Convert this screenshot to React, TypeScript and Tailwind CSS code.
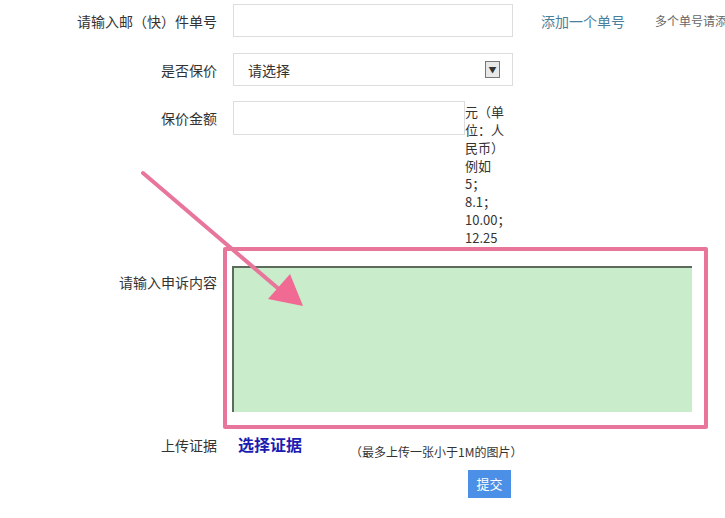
import React from 'react';

const font = { fontFamily: '"Microsoft YaHei", "Noto Sans CJK SC", sans-serif' };

function Label({ children }: { children: React.ReactNode }) {
  return <div className="w-[217px] shrink-0 text-right text-[14px] leading-[20px] text-[#333]">{children}</div>;
}

export default function App() {
  const unitLines = ['元（单', '位：人', '民币）', '例如', '5；', '8.1；', '10.00；', '12.25'];
  return (
    <div className="relative w-[725px] h-[518px] overflow-hidden bg-white text-[#333]" style={font}>
      {/* row 1 */}
      <div className="flex h-[33px] items-center mt-[4px] whitespace-nowrap">
        <Label>请输入邮（快）件单号</Label>
        <div className="ml-[16px] h-[33px] w-[280px] shrink-0 border border-[#ddd]" />
        <span className="ml-[28px] text-[14px] leading-[20px] text-[#4a7f9c]">添加一个单号</span>
        <span className="ml-[30px] text-[12px] leading-[16px] text-[#666]">多个单号请添加</span>
      </div>
      {/* row 2 */}
      <div className="mt-[16px] flex h-[33px] items-center">
        <Label>是否保价</Label>
        <div className="ml-[16px] flex h-[33px] w-[280px] items-center justify-between border border-[#ddd] pl-[14px] pr-[12px]">
          <span className="text-[14px] leading-[20px]">请选择</span>
          <span className="flex h-[17px] w-[15px] items-center justify-center border border-[#777] bg-[#e8e8e8] text-[8px] leading-none">▼</span>
        </div>
      </div>
      {/* row 3 */}
      <div className="mt-[15px] flex items-start">
        <div className="pt-[7px]"><Label>保价金额</Label></div>
        <div className="ml-[16px] h-[34px] w-[232px] border border-[#ddd]" />
        <div className="pt-[2px] text-[13px] whitespace-nowrap">
          {unitLines.map((l) => <div key={l} className="h-[18px] leading-[18px]">{l}</div>)}
        </div>
      </div>
      {/* complaint */}
      <div className="flex items-start">
        <div className="pt-[25px]"><Label>请输入申诉内容</Label></div>
        <div className="ml-[6px] h-[182px] w-[485px] rounded-[2px] border-[4px] border-[#e8769a] pl-[5px] pt-[15px]">
          <div className="h-[146px] w-[460px] border-t-[2px] border-l-[2px] border-[#5d6b5d] bg-[#c9ecca]" />
        </div>
      </div>
      {/* upload */}
      <div className="mt-[4px] flex items-start">
        <div className="pt-[2px]"><Label>上传证据</Label></div>
        <span className="ml-[21px] text-[16px] leading-[22px] font-bold text-[#1c1cb0]">选择证据</span>
        <span className="ml-[48px] mt-[11px] text-[12px] leading-[16px]">（最多上传一张小于1M的图片）</span>
      </div>
      {/* submit */}
      <div className="mt-[10px] flex pl-[468px]">
        <button className="h-[28px] w-[43px] bg-[#4b8fe6] text-[13px] leading-[28px] text-white">提交</button>
      </div>
      {/* annotation arrow */}
      <svg className="pointer-events-none absolute left-0 top-0" width="725" height="518">
        <line x1="143" y1="173" x2="280" y2="290" stroke="#e8769a" strokeWidth="4" strokeLinecap="round" />
        <polygon points="303,306 268,299 290,274" fill="#f06a93" />
      </svg>
    </div>
  );
}
